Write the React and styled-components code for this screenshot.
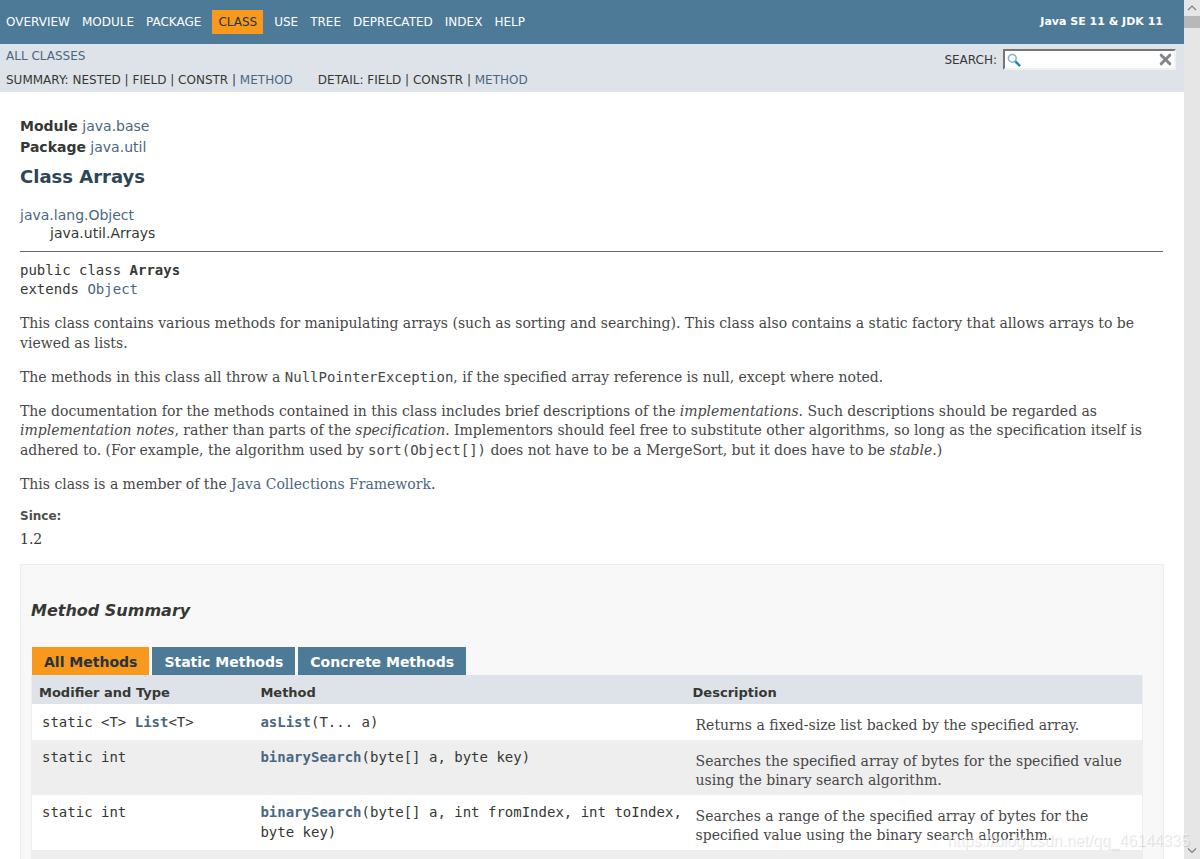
import styled, { createGlobalStyle } from "styled-components";

const GlobalStyle = createGlobalStyle`
  body {
    margin: 0;
    background: #fff;
    color: #353833;
    font-family: "DejaVu Sans", Arial, Helvetica, sans-serif;
    font-size: 14px;
    overflow: hidden;
  }
`;

const Window = styled.div`
  position: relative;
  display: flex;
  height: 859px;
  overflow: hidden;
`;

const Page = styled.div`
  flex: 1;
  min-width: 0;
`;

const TopNav = styled.nav`
  display: flex;
  align-items: center;
  justify-content: space-between;
  height: 44px;
  padding-right: 21px;
  background: #4d7a97;
  color: #fff;
  font-size: 12px;
`;

const NavList = styled.ul`
  display: flex;
  margin: 0;
  padding: 0;
  list-style: none;
`;

const NavItem = styled.li`
  padding: 5px 6px;
  line-height: 14px;
  margin: ${(props) => (props.$active ? "0 5px" : "0")};
  background: ${(props) => (props.$active ? "#f8981d" : "transparent")};
  color: ${(props) => (props.$active ? "#253441" : "#fff")};
`;

const About = styled.strong`
  font-size: 11px;
  line-height: 14px;
`;

const SubNav = styled.div`
  display: flex;
  justify-content: space-between;
  height: 48px;
  padding: 0 8px 0 6px;
  box-sizing: border-box;
  background: #dee3e9;
  font-size: 12px;
`;

const SubLinks = styled.div`
  display: flex;
  flex-direction: column;
  line-height: 24px;
`;

const SubRow = styled.div`
  display: flex;
  gap: 25px;
`;

const Link = styled.a`
  color: #4a6782;
  font-weight: ${(props) => (props.$strong ? "bold" : "inherit")};
`;

const Search = styled.div`
  display: flex;
  align-items: flex-start;
  gap: 6px;
  padding-top: 5px;
  line-height: 23px;
`;

const SearchBox = styled.div`
  display: flex;
  align-items: center;
  justify-content: space-between;
  box-sizing: border-box;
  width: 173px;
  height: 21px;
  padding: 0 2px 0 1px;
  background: #fff;
  border: 2px solid;
  border-color: #767676 #f0f0f0 #f0f0f0 #767676;
`;

const Content = styled.main`
  padding: 24px 20px 0;
`;

const Label = styled.div`
  line-height: 21px;
`;

const Title = styled.h2`
  margin: 8px 0 18px;
  color: #2c4557;
  font-size: 18px;
  line-height: 22px;
`;

const Inheritance = styled.div`
  line-height: 18px;
  padding-left: ${(props) => (props.$level ? "30px" : "0")};
`;

const Rule = styled.hr`
  height: 1px;
  margin: 9px 1px 9px 0;
  border: 0;
  background: #666;
`;

const Signature = styled.pre`
  margin: 0 0 15px;
  font-family: "DejaVu Sans Mono", monospace;
  font-size: 14px;
  line-height: 19px;
`;

const Block = styled.p`
  margin: 0 0 14.4px;
  color: #474747;
  font-family: "DejaVu Serif", Georgia, serif;
  font-size: 14px;
  line-height: 19.6px;
  word-spacing: -0.06px;

  code {
    font-family: "DejaVu Sans Mono", monospace;
    font-size: 14px;
    line-height: 1;
  }
`;

const Since = styled.div`
  color: #4e4e4e;
  font-size: 12px;
  font-weight: bold;
  line-height: 18px;
  margin-top: -2px;
`;

const Version = styled.div`
  font-family: "DejaVu Serif", Georgia, serif;
  line-height: 20px;
  margin: 4px 0 15px;
`;

const Summary = styled.section`
  height: 400px;
  padding: 0 20px 0 10px;
  background: #f8f8f8;
  border: 1px solid #ededed;
`;

const SummaryTitle = styled.h3`
  margin: 0;
  padding: 36px 0 26px;
  font-size: 16px;
  font-style: italic;
  line-height: 20px;
`;

const Tabs = styled.div`
  display: flex;
  gap: 3px;
  padding-left: 1px;
`;

const Tab = styled.div`
  height: 28px;
  padding: 0 12px;
  box-sizing: border-box;
  background: ${(props) => (props.$active ? "#f8981d" : "#4d7a97")};
  color: ${(props) => (props.$active ? "#253441" : "#fff")};
  font-weight: bold;
  line-height: 30px;
`;

const Table = styled.div`
  border: solid #eee;
  border-width: 0 1px;
`;

const HeadRow = styled.div`
  display: grid;
  grid-template-columns: 221.4px 432.2px 1fr;
  height: 29px;
  padding-left: 7px;
  background: #dee3e9;
  font-size: 13px;
  font-weight: bold;
  line-height: 36px;
`;

const Code = styled.div`
  padding-top: 8.4px;
  font-family: "DejaVu Sans Mono", monospace;
  line-height: 19.6px;
`;

const Row = styled.div`
  display: grid;
  grid-template-columns: 218.4px 435.2px 1fr;
  height: ${(props) => (props.$short ? "36px" : "55px")};
  padding-left: 10px;
  background: ${(props) => (props.$alt ? "#eeeeef" : "#fff")};

  ${Code} {
    padding-top: ${(props) => (props.$short ? "9px" : "8.4px")};
  }
`;

const Description = styled.div`
  padding: 12px 10px 0 0;
  color: #474747;
  font-family: "DejaVu Serif", Georgia, serif;
  line-height: 19.4px;
  word-spacing: 0.06px;
`;

const Scrollbar = styled.div`
  display: flex;
  flex-direction: column;
  align-items: center;
  width: 16px;
  background: #e6e6e6;
`;

const Thumb = styled.div`
  width: 16px;
  height: 12px;
  margin-bottom: auto;
  background: #b8b8b8;
`;

const Watermark = styled.div`
  position: absolute;
  left: 947px;
  top: 831px;
  color: rgba(255, 255, 255, 0.6);
  font-family: "Liberation Sans", Arial, sans-serif;
  font-size: 15.8px;
  line-height: 20px;
  text-shadow: 1px 1px 1px rgba(0, 0, 0, 0.13);
  white-space: nowrap;
`;

const navItems = [
  "OVERVIEW",
  "MODULE",
  "PACKAGE",
  "CLASS",
  "USE",
  "TREE",
  "DEPRECATED",
  "INDEX",
  "HELP",
];

const methods = [
  {
    type: (
      <>
        static &lt;T&gt; <Link $strong>List</Link>&lt;T&gt;
      </>
    ),
    name: "asList",
    params: "(T... a)",
    description: "Returns a fixed-size list backed by the specified array.",
    short: true,
  },
  {
    type: "static int",
    name: "binarySearch",
    params: "(byte[] a, byte key)",
    description:
      "Searches the specified array of bytes for the specified value using the binary search algorithm.",
  },
  {
    type: "static int",
    name: "binarySearch",
    params: "(byte[] a, int fromIndex, int toIndex, byte key)",
    description:
      "Searches a range of the specified array of bytes for the specified value using the binary search algorithm.",
  },
];

function Glass() {
  return (
    <svg width="16" height="16" viewBox="0 0 16 16" fill="none">
      <circle cx="6.3" cy="6.3" r="3.9" stroke="#7db5d3" strokeWidth="1.5" />
      <path d="M9.3 9.3l4.8 4.8" stroke="#2a86bd" strokeWidth="2.6" />
    </svg>
  );
}

function Cross() {
  return (
    <svg width="13" height="13" viewBox="0 0 13 13">
      <path
        d="M2.2 2.2l8.6 8.6M10.8 2.2l-8.6 8.6"
        stroke="#808488"
        strokeWidth="3"
        strokeLinecap="round"
      />
    </svg>
  );
}

function Arrow({ down }) {
  return (
    <svg width="16" height="16" viewBox="0 0 16 16" fill="none">
      <path
        d={down ? "M4 5.5l4 4 4-4" : "M4 10l4-4 4 4"}
        stroke="#808080"
        strokeWidth="1.2"
      />
    </svg>
  );
}

function Header() {
  return (
    <header>
      <TopNav>
        <NavList>
          {navItems.map((item) => (
            <NavItem key={item} $active={item === "CLASS"}>
              {item}
            </NavItem>
          ))}
        </NavList>
        <About>Java SE 11 &amp; JDK 11</About>
      </TopNav>
      <SubNav>
        <SubLinks>
          <Link>ALL CLASSES</Link>
          <SubRow>
            <span>
              SUMMARY: NESTED | FIELD | CONSTR | <Link>METHOD</Link>
            </span>
            <span>
              DETAIL: FIELD | CONSTR | <Link>METHOD</Link>
            </span>
          </SubRow>
        </SubLinks>
        <Search>
          <span>SEARCH:</span>
          <SearchBox>
            <Glass />
            <Cross />
          </SearchBox>
        </Search>
      </SubNav>
    </header>
  );
}

function MethodSummary() {
  return (
    <Summary>
      <SummaryTitle>Method Summary</SummaryTitle>
      <Tabs>
        <Tab $active>All Methods</Tab>
        <Tab>Static Methods</Tab>
        <Tab>Concrete Methods</Tab>
      </Tabs>
      <Table>
        <HeadRow>
          <span>Modifier and Type</span>
          <span>Method</span>
          <span>Description</span>
        </HeadRow>
        {methods.map((method, i) => (
          <Row key={i} $alt={i % 2 === 1} $short={method.short}>
            <Code>{method.type}</Code>
            <Code>
              <Link $strong>{method.name}</Link>
              {method.params}
            </Code>
            <Description>{method.description}</Description>
          </Row>
        ))}
        <Row $alt />
      </Table>
    </Summary>
  );
}

function App() {
  return (
    <>
      <GlobalStyle />
      <Window>
        <Page>
          <Header />
          <Content>
            <Label>
              <b>Module</b> <Link>java.base</Link>
            </Label>
            <Label>
              <b>Package</b> <Link>java.util</Link>
            </Label>
            <Title>Class Arrays</Title>
            <Inheritance>
              <Link>java.lang.Object</Link>
            </Inheritance>
            <Inheritance $level={1}>java.util.Arrays</Inheritance>
            <Rule />
            <Signature>
              public class <b>Arrays</b>
              {"\n"}extends <Link>Object</Link>
            </Signature>
            <Block>
              This class contains various methods for manipulating arrays (such
              as sorting and searching). This class also contains a static
              factory that allows arrays to be viewed as lists.
            </Block>
            <Block>
              The methods in this class all throw a{" "}
              <code>NullPointerException</code>, if the specified array
              reference is null, except where noted.
            </Block>
            <Block>
              The documentation for the methods contained in this class includes
              brief descriptions of the <i>implementations</i>. Such
              descriptions should be regarded as <i>implementation notes</i>,
              rather than parts of the <i>specification</i>. Implementors should
              feel free to substitute other algorithms, so long as the
              specification itself is adhered to. (For example, the algorithm
              used by <code>sort(Object[])</code> does not have to be a
              MergeSort, but it does have to be <i>stable</i>.)
            </Block>
            <Block>
              This class is a member of the{" "}
              <Link>Java Collections Framework</Link>.
            </Block>
            <Since>Since:</Since>
            <Version>1.2</Version>
            <MethodSummary />
          </Content>
        </Page>
        <Scrollbar>
          <Arrow />
          <Thumb />
          <Arrow down />
        </Scrollbar>
        <Watermark>https://blog.csdn.net/qq_46144335</Watermark>
      </Window>
    </>
  );
}

export default App;
